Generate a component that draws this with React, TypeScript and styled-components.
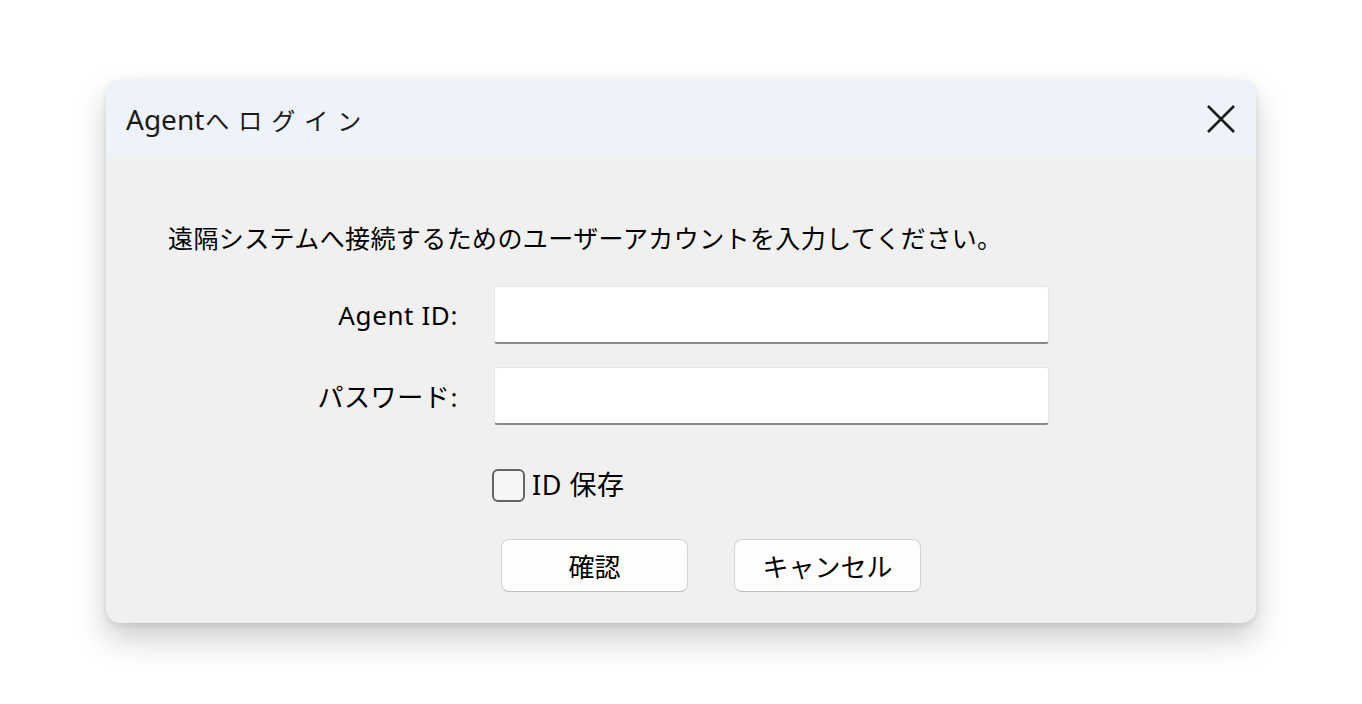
import React from "react";
import styled, { createGlobalStyle } from "styled-components";

const GlobalStyle = createGlobalStyle`
    html, body {
        margin: 0;
        padding: 0;
        background: #ffffff;
        font-family: "Noto Sans", "Noto Sans CJK JP", sans-serif;
        color: #000000;
    }
`;

export default function App() {
    return (
        <>
            <GlobalStyle />
            <Page>
                <Dialog>
                    <TitleBar>
                        <Title>
                            Agent<TitleKana>へログイン</TitleKana>
                        </Title>
                        <CloseButton aria-label="close">
                            <svg width="30" height="30" viewBox="0 0 30 30">
                                <path
                                    d="M2 2 L28 28 M28 2 L2 28"
                                    stroke="#1b1b1b"
                                    strokeWidth="2.6"
                                    fill="none"
                                />
                            </svg>
                        </CloseButton>
                    </TitleBar>

                    <Body>
                        <Message>
                            遠隔システムへ接続するためのユーザーアカウントを入力してください。
                        </Message>

                        <Form>
                            <Label>Agent ID:</Label>
                            <Input type="text" />
                            <Label $spaced>パスワード:</Label>
                            <Input type="password" $spaced />

                            <CheckRow>
                                <CheckBox />
                                <CheckText>ID 保存</CheckText>
                            </CheckRow>

                            <ButtonRow>
                                <Button>確認</Button>
                                <Button>キャンセル</Button>
                            </ButtonRow>
                        </Form>
                    </Body>
                </Dialog>
            </Page>
        </>
    );
}

const Page = styled.div`
    display: flex;
    justify-content: center;
    padding-top: 80px;
    min-height: 704px;
    box-sizing: border-box;
`;

const Dialog = styled.div`
    width: 1150px;
    height: 543px;
    border-radius: 14px;
    overflow: hidden;
    background: #f0f0f0;
    box-shadow: 0 16px 32px rgba(0, 0, 0, 0.2), 0 2px 6px rgba(0, 0, 0, 0.1);
    display: flex;
    flex-direction: column;
`;

const TitleBar = styled.div`
    height: 78px;
    background: #eef2f9;
    display: flex;
    align-items: center;
    justify-content: space-between;
    padding: 0 20px 0 20px;
    flex-shrink: 0;
`;

const Title = styled.div`
    font-size: 28px;
    color: #1a1a1a;
    display: flex;
    align-items: center;
`;

const TitleKana = styled.span`
    font-family: "Noto Sans CJK JP", sans-serif;
    font-size: 24px;
    letter-spacing: 9px;
    margin-left: 1px;
`;

const CloseButton = styled.button`
    background: none;
    border: none;
    padding: 0;
    width: 30px;
    height: 30px;
    display: flex;
    align-items: center;
    justify-content: center;
    cursor: pointer;
`;

const Body = styled.div`
    padding: 62px 0 0 62px;
    display: flex;
    flex-direction: column;
`;

const Message = styled.div`
    font-family: "Noto Sans CJK JP", sans-serif;
    font-size: 25px;
    line-height: 34px;
    letter-spacing: 0.4px;
`;

const Form = styled.div`
    display: grid;
    grid-template-columns: 290px 555px;
    column-gap: 36px;
    align-items: center;
    margin-top: 32px;
`;

const Label = styled.div<{ $spaced?: boolean }>`
    font-family: "Noto Sans", "Noto Sans CJK JP", sans-serif;
    font-size: 26px;
    letter-spacing: 0.6px;
    text-align: right;
    margin-top: ${(p) => (p.$spaced ? "23px" : "0")};
`;

const Input = styled.input<{ $spaced?: boolean }>`
    height: 58px;
    box-sizing: border-box;
    background: #ffffff;
    border: 1px solid #e6e6e6;
    border-bottom: 2px solid #8a8a8a;
    border-radius: 3px;
    outline: none;
    font-size: 22px;
    padding: 0 10px;
    margin-top: ${(p) => (p.$spaced ? "23px" : "0")};
`;

const CheckRow = styled.label`
    grid-column: 2;
    display: flex;
    align-items: center;
    gap: 7px;
    margin: 43px 0 0 -2px;
`;

const CheckBox = styled.span`
    width: 33px;
    height: 33px;
    box-sizing: border-box;
    border: 2px solid #646464;
    border-radius: 6px;
    background: #f6f6f6;
`;

const CheckText = styled.span`
    font-family: "Noto Sans", "Noto Sans CJK JP", sans-serif;
    font-size: 27px;
    line-height: 34px;
    letter-spacing: 0.5px;
`;

const ButtonRow = styled.div`
    grid-column: 2;
    display: flex;
    gap: 46px;
    margin: 37px 0 0 7px;
`;

const Button = styled.button`
    width: 187px;
    height: 53px;
    box-sizing: border-box;
    background: #fdfdfd;
    border: 1.5px solid #d3d3d3;
    border-bottom-color: #bdbdbd;
    border-radius: 8px;
    font-family: "Noto Sans CJK JP", sans-serif;
    font-size: 26px;
    color: #000000;
    cursor: pointer;
`;
